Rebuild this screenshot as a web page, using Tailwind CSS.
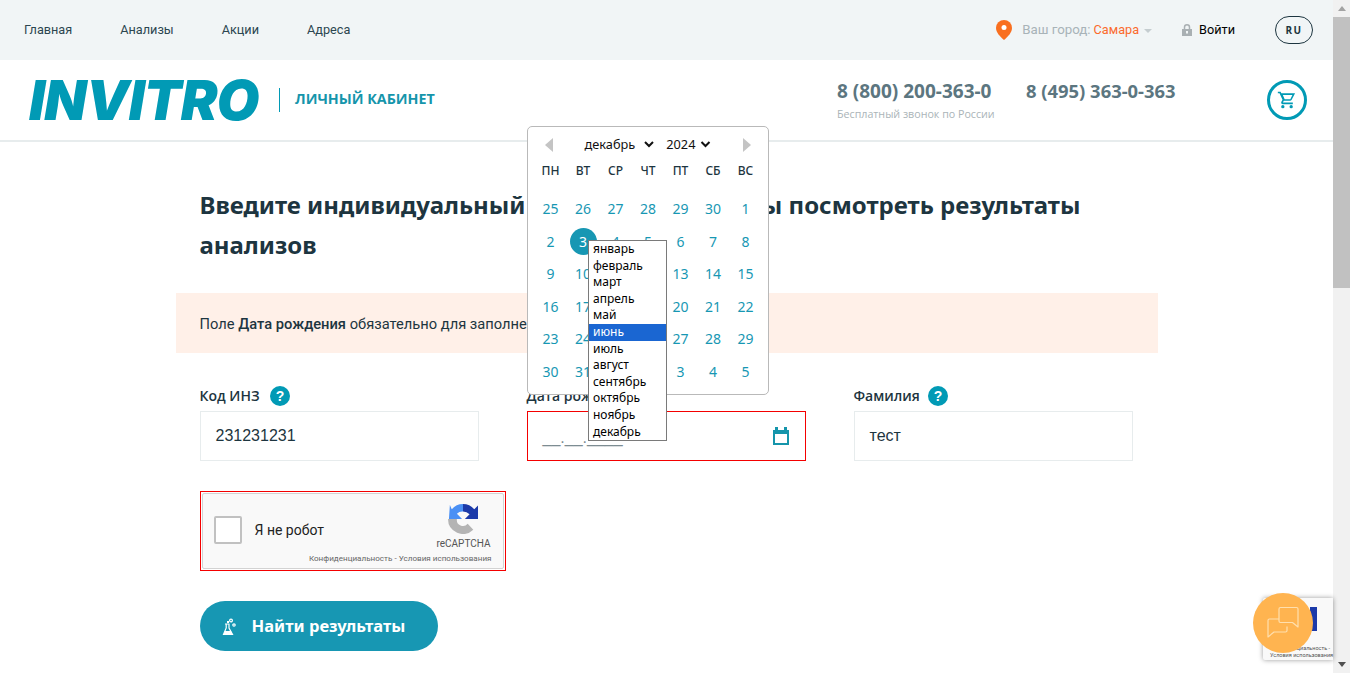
<!DOCTYPE html>
<html lang="ru">
<head>
  <meta charset="UTF-8" />
  <title>Личный кабинет - INVITRO</title>
  <script src="https://cdn.jsdelivr.net/npm/@tailwindcss/browser@4"></script>
</head>
<body class="bg-white font-['Roboto','Noto_Sans',sans-serif] text-[#1d3540]">
<div class="relative flex h-[673px] w-[1350px] overflow-hidden">

  <div class="w-[1333px] shrink-0">
    <!-- top bar -->
    <div class="flex h-[60px] items-center bg-[#f1f5f6] pl-6 pr-5 text-[12.700px]">
      <nav class="flex gap-12 text-[#2c4650]">
        <a>Главная</a>
        <a>Анализы</a>
        <a>Акции</a>
        <a>Адреса</a>
      </nav>
      <div class="ml-auto flex items-center">
        <svg class="mr-[10px] h-5 w-4" viewBox="0 0 16 20"><path fill="#f96f1f" d="M8 0a8 8 0 0 0-8 8c0 4.500 4 8.500 8 12 4-3.500 8-7.500 8-12a8 8 0 0 0-8-8z"/><circle cx="8" cy="7.500" r="2.500" fill="#fff"/></svg>
        <span class="text-[13.300px] text-[#a8b3b8]">Ваш город:</span>
        <span class="ml-[3px] text-[#fb6a2c]">Самара</span>
        <span class="ml-[5px] mt-[1px] h-0 w-0 border-x-[4px] border-t-[4px] border-x-transparent border-t-[#c5cdd0]"></span>
        <svg class="ml-[30px] mr-[7px] h-[12px] w-[10px]" viewBox="0 0 10 12"><path fill="none" stroke="#a9b0b3" stroke-width="1.500" d="M2.500 5V3.300a2.500 2.500 0 0 1 5 0V5"/><path fill="#a9b0b3" d="M0 5h10v7H0z"/><rect x="4" y="7" width="2" height="2.500" fill="#f1f5f6"/></svg>
        <span class="text-black">Войти</span>
        <span class="ml-10 flex h-[28px] w-[38px] items-center justify-center rounded-[14px] border border-[#1d3540] font-['Open_Sans',sans-serif] text-[10px] font-bold tracking-[1.500px]">RU</span>
      </div>
    </div>

    <!-- header -->
    <header class="flex h-[82px] items-center border-b-2 border-[#e7eced] pl-[29px] pr-[26px]">
      <span class="w-[230px] font-['Inter',sans-serif] text-[55px] font-black italic leading-none tracking-[-0.800px] text-[#019ab5]">INVITRO</span>
      <span class="ml-[20px] h-6 w-px bg-[#019ab5]"></span>
      <span class="ml-[15px] mb-[2px] font-['Open_Sans',sans-serif] text-[14.300px] font-bold text-[#1595ab]">ЛИЧНЫЙ КАБИНЕТ</span>
      <div class="ml-auto flex gap-[32px] self-start pt-[19px]">
        <div class="w-[157px]">
          <div class="font-['Noto_Sans',sans-serif] text-[19px] font-bold leading-6 text-[#5c7680]">8 (800) 200-363-0</div>
          <div class="mt-[3px] whitespace-nowrap font-['Open_Sans',sans-serif] text-[10.700px] leading-4 text-[#aab4b8]">Бесплатный звонок по России</div>
        </div>
        <div class="w-[149px] whitespace-nowrap font-['Noto_Sans',sans-serif] text-[18.400px] font-bold leading-6 text-[#5c7680]">8 (495) 363-0-363</div>
      </div>
      <span class="ml-[92px] flex h-10 w-10 items-center justify-center rounded-full border-[3px] border-[#019ab5]">
        <svg class="h-5 w-5" viewBox="0 0 24 24" fill="#019ab5"><path d="M7 18a2 2 0 1 0 0 4 2 2 0 0 0 0-4zm10 0a2 2 0 1 0 0 4 2 2 0 0 0 0-4zM7.200 14.800l1-1.800h7.500c.750 0 1.400-.410 1.750-1.030L21.700 4H5.200L4.300 2H1v2h2l3.600 7.590-1.350 2.450C4.520 15.370 5.480 17 7 17h12v-2H7.400a.250.250 0 0 1-.200-.200zM7 6h11.500l-2.500 5H9.200z" fill-rule="evenodd"/></svg>
      </span>
    </header>

    <main class="mx-auto w-[982px] pt-[43px]">
      <h1 class="px-6 font-['Noto_Sans',sans-serif] text-[24px] font-bold leading-[40px] text-[#1d3540]">Введите индивидуальный <span class="tracking-[-0.530px]">номер заказа, чт</span>обы посмотреть результаты анализов</h1>

      <div class="mt-[28px] flex h-[60px] items-center bg-[#fff0e8] px-6 text-[14.700px]">
        <span class="mt-[3px]">Поле <b class="font-medium">Дата рождения</b> обязательно для заполнения</span>
      </div>

      <form class="mt-[30px] grid grid-cols-[279px_279px_279px] gap-x-12 px-6">
        <div>
          <label class="flex h-[28px] items-start gap-[10px] font-['Open_Sans',sans-serif] text-[14px] font-semibold leading-[26px]">Код ИНЗ
            <svg class="mt-[3px] h-5 w-5" viewBox="0 0 20 20"><circle cx="10" cy="10" r="10" fill="#019ab5"/><text x="10" y="15" text-anchor="middle" font-family="Liberation Sans" font-size="14" font-weight="700" fill="#fff">?</text></svg>
          </label>
          <div class="flex h-[50px] items-center border border-[#e7eced] px-[15px] font-['Liberation_Sans',sans-serif] text-[16px]">231231231</div>
        </div>
        <div>
          <label class="flex h-[28px] items-start font-['Open_Sans',sans-serif] text-[14px] font-semibold leading-[26px]">Дата рождения</label>
          <div class="flex h-[50px] items-center justify-between border border-[#f40000] pl-[15px] pr-4 font-['Liberation_Sans',sans-serif] text-[16px] text-[#7d8c92]">
            <span class="mt-1">__.__.____</span>
            <svg class="h-[18px] w-4" viewBox="0 0 16 18"><path fill="#1595ab" d="M2 0h3v3h6V0h3v3h2v15H0V3h2z"/><path fill="#fff" d="M2 7h12v9H2z"/></svg>
          </div>
        </div>
        <div>
          <label class="flex h-[28px] items-start gap-[8px] font-['Open_Sans',sans-serif] text-[14px] font-semibold leading-[26px]">Фамилия
            <svg class="mt-[3px] h-5 w-5" viewBox="0 0 20 20"><circle cx="10" cy="10" r="10" fill="#019ab5"/><text x="10" y="15" text-anchor="middle" font-family="Liberation Sans" font-size="14" font-weight="700" fill="#fff">?</text></svg>
          </label>
          <div class="flex h-[50px] items-center border border-[#e7eced] px-[15px] font-['Liberation_Sans',sans-serif] text-[16px]">тест</div>
        </div>
      </form>

      <div class="ml-6 mt-[30px] h-20 w-[306px] border border-[#f40000] p-px">
        <div class="relative flex h-[76px] w-[302px] rounded-[2px] border border-[#d3d3d3] bg-[#f9f9f9]">
          <span class="ml-[11px] mt-[22px] h-7 w-7 rounded-[2px] border-2 border-[#c1c1c1] bg-white"></span>
          <span class="ml-[13px] mt-[26px] text-[14px] leading-5 text-[#222]">Я не робот</span>
          <svg class="absolute right-[25px] top-[10px] h-[30px] w-[30px]" viewBox="0 0 32 32"><path fill="#1c3aa9" d="M16 0a16 16 0 0 1 12 5.500L32 1.500V16H18l5-5a10 10 0 0 0-7-3z"/><path fill="#4a90f5" d="M16 0A16 16 0 0 0 4 5.500L2 1 1 16h14l-5.500-5.500A8 8 0 0 1 16 8z"/><path fill="#b4b4b4" d="M0 16h9.500a6.500 6.500 0 0 0 11.500 5l6 6.500A16 16 0 0 1 0 16z"/></svg>
          <span class="absolute right-[12px] top-[44px] text-[10px] leading-3 text-[#555]">reCAPTCHA</span>
          <span class="absolute right-[11px] top-[59px] whitespace-nowrap text-[8.100px] leading-[10px] text-[#666]">Конфиденциальность - Условия использования</span>
        </div>
      </div>

      <button class="ml-6 mt-[30px] flex h-[50px] w-[238px] items-center gap-[16px] rounded-full bg-[#1797b3] pl-[22px] font-['Noto_Sans',sans-serif] text-[16.500px] font-bold text-white">
        <svg class="h-5 w-[14px]" viewBox="0 0 14 20" fill="none" stroke="#fff" stroke-width="1.200"><path d="M3 8h4.500M4.200 8v4L1.500 18.500h9L7 12V8"/><path fill="#fff" stroke="none" d="M3 15h6l1.500 3.500h-9zM5 5h2v2H5z"/><circle cx="9" cy="4.500" r="1.400"/><circle cx="12" cy="9" r="1.200"/></svg>
        Найти результаты
      </button>
    </main>
  </div>

  <!-- scrollbar -->
  <div class="flex w-[17px] shrink-0 flex-col items-center bg-[#f1f1f1]">
    <span class="mt-[6px] h-0 w-0 border-x-[4px] border-b-[5px] border-x-transparent border-b-[#a3a3a3]"></span>
    <span class="mt-[6px] h-[271px] w-full bg-[#c1c1c1]"></span>
    <span class="mb-[6px] mt-auto h-0 w-0 border-x-[4px] border-t-[5px] border-x-transparent border-t-[#505050]"></span>
  </div>

  <!-- datepicker popup -->
  <div class="absolute left-[527px] top-[126px] h-[269px] w-[242px] rounded-[5px] border border-[#b9b9b9] bg-white px-[6.250px] font-['Noto_Sans',sans-serif] text-[#1797b3]">
    <div class="flex h-[35px] items-center justify-between px-[10.500px] text-[#111]">
      <span class="h-0 w-0 border-y-[7px] border-r-[8px] border-y-transparent border-r-[#c4c4c4]"></span>
      <div class="flex items-center text-[12.750px]">
        <span>декабрь</span>
        <svg class="ml-[9px] h-[7px] w-[10px]" viewBox="0 0 10 7" fill="none" stroke="#111" stroke-width="2"><path d="M1 1l4 4 4-4"/></svg>
        <span class="ml-[12px]">2024</span>
        <svg class="ml-[5px] h-[7px] w-[11px]" viewBox="0 0 10 7" fill="none" stroke="#111" stroke-width="2"><path d="M1 1l4 4 4-4"/></svg>
      </div>
      <span class="h-0 w-0 border-y-[7px] border-l-[8px] border-y-transparent border-l-[#c4c4c4]"></span>
    </div>
    <div class="grid h-[13px] grid-cols-7 items-center text-center text-[12px] font-medium text-[#1d3540]">
      <span>ПН</span><span>ВТ</span><span>СР</span><span>ЧТ</span><span>ПТ</span><span>СБ</span><span>ВС</span>
    </div>
    <div class="mt-[17.500px] grid auto-rows-[32.500px] grid-cols-7 place-items-center text-[14px]">
      <span>25</span><span>26</span><span>27</span><span>28</span><span>29</span><span>30</span><span>1</span>
      <span>2</span><span class="flex h-[27px] w-[27px] items-center justify-center rounded-full bg-[#1797b3] text-white">3</span><span>4</span><span>5</span><span>6</span><span>7</span><span>8</span>
      <span>9</span><span>10</span><span>11</span><span>12</span><span>13</span><span>14</span><span>15</span>
      <span>16</span><span>17</span><span>18</span><span>19</span><span>20</span><span>21</span><span>22</span>
      <span>23</span><span>24</span><span>25</span><span>26</span><span>27</span><span>28</span><span>29</span>
      <span>30</span><span>31</span><span>1</span><span>2</span><span>3</span><span>4</span><span>5</span>
    </div>
  </div>

  <!-- month dropdown -->
  <ul class="absolute left-[588px] top-[240px] w-[79px] border border-[#7a7a7a] bg-white font-['Noto_Sans',sans-serif] text-[12px] leading-[16.600px] text-black">
    <li class="px-1">январь</li>
    <li class="px-1">февраль</li>
    <li class="px-1">март</li>
    <li class="px-1">апрель</li>
    <li class="px-1">май</li>
    <li class="bg-[#1a66d2] px-1 text-white">июнь</li>
    <li class="px-1">июль</li>
    <li class="px-1">август</li>
    <li class="px-1">сентябрь</li>
    <li class="px-1">октябрь</li>
    <li class="px-1">ноябрь</li>
    <li class="px-1">декабрь</li>
  </ul>

  <!-- floating recaptcha badge and chat -->
  <div class="absolute left-[1263px] top-[598px] h-[62px] w-[70px] rounded-l-[2px] bg-[#f9f9f9] shadow-[0_0_5px_rgba(0,0,0,0.4)]">
    <span class="absolute left-[47px] top-[9px] h-[24px] w-[7px] bg-[#1c3aa9]"></span>
    <span class="absolute bottom-[2px] left-[7px] right-0 whitespace-nowrap text-[5.500px] leading-[6.500px] text-[#555]"><span class="block pr-[3px] text-right">Конфиденциальность -</span>Условия использования</span>
  </div>
  <div class="absolute left-[1253px] top-[593px] flex h-[60px] w-[60px] items-center justify-center rounded-full bg-[#ffb450]">
    <svg class="h-[34px] w-[34px]" viewBox="0 0 34 34" fill="none" stroke="#ffdfae" stroke-width="1.200" stroke-linejoin="round"><path d="M14.500 1.500h16a1.500 1.500 0 0 1 1.500 1.500v18l-5.500-4.500h-12a1.500 1.500 0 0 1-1.500-1.500V3a1.500 1.500 0 0 1 1.500-1.500z"/><path d="M13 13H3.500A1.500 1.500 0 0 0 2 14.500V31l6-5h11.500a1.500 1.500 0 0 0 1.500-1.500v-4"/></svg>
  </div>
</div>
</body>
</html>
